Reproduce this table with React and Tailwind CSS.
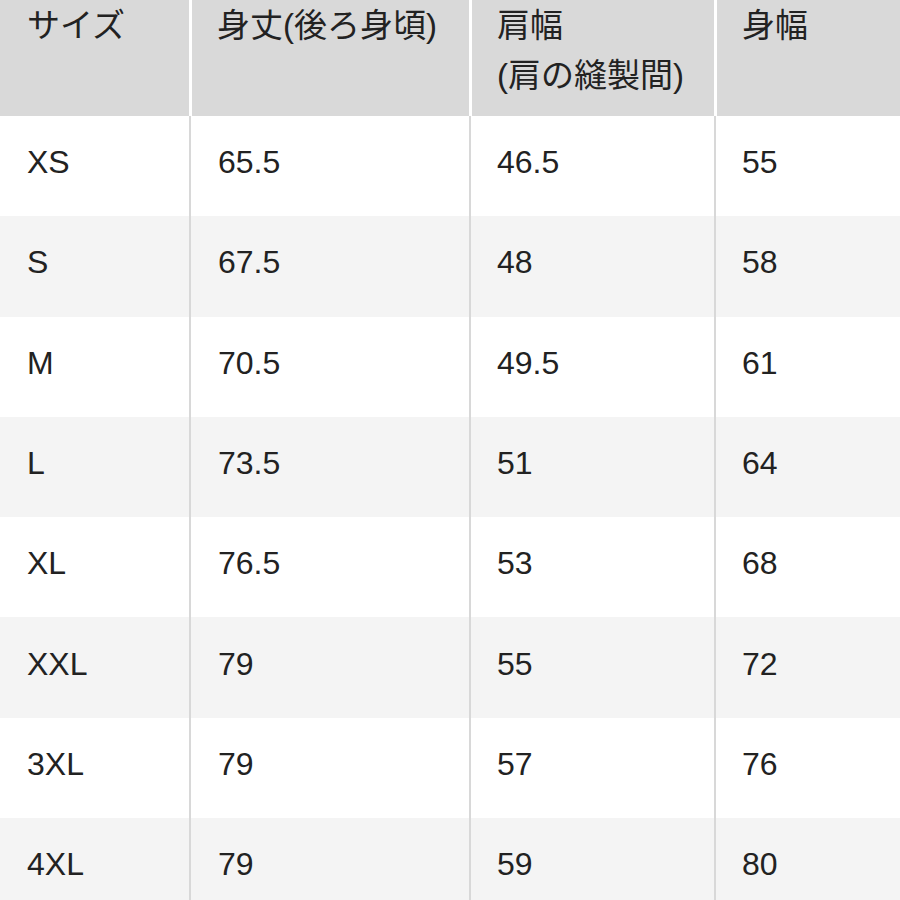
export default function App() {
  const rows = [
    ["XS", "65.5", "46.5", "55"],
    ["S", "67.5", "48", "58"],
    ["M", "70.5", "49.5", "61"],
    ["L", "73.5", "51", "64"],
    ["XL", "76.5", "53", "68"],
    ["XXL", "79", "55", "72"],
    ["3XL", "79", "57", "76"],
    ["4XL", "79", "59", "80"],
  ];
  const font = { fontFamily: '"Liberation Sans", "Noto Sans CJK JP", sans-serif' };
  return (
    <div className="w-[900px] h-[900px] overflow-hidden bg-white text-[#222222]" style={font}>
      <div className="grid grid-cols-[189px_280px_245px_1fr] h-[116px] text-[33px] leading-[50px]">
        <div className="bg-[#d9d9d9] pl-[27px] pt-[1px]">サイズ</div>
        <div className="bg-[#d9d9d9] border-l-[3px] border-white pl-[25px] pt-[1px]">身丈(後ろ身頃)</div>
        <div className="bg-[#d9d9d9] border-l-[3px] border-white pl-[25px] pt-[1px]">
          <div>肩幅</div>
          <div>(肩の縫製間)</div>
        </div>
        <div className="bg-[#d9d9d9] border-l-[3px] border-white pl-[25px] pt-[1px]">身幅</div>
      </div>
      {rows.map((r, i) => (
        <div
          key={i}
          className={`grid grid-cols-[189px_280px_245px_1fr] h-[100.3px] text-[32px] ${i % 2 === 1 ? "bg-[#f4f4f4]" : "bg-white"}`}
        >
          <div className="flex items-center pl-[27px] pb-[8px]">{r[0]}</div>
          <div className="flex items-center pl-[27px] pb-[8px] border-l-2 border-[#d8d8d8]">{r[1]}</div>
          <div className="flex items-center pl-[26px] pb-[8px] border-l-2 border-[#d8d8d8]">{r[2]}</div>
          <div className="flex items-center pl-[26px] pb-[8px] border-l-2 border-[#d8d8d8]">{r[3]}</div>
        </div>
      ))}
    </div>
  );
}
